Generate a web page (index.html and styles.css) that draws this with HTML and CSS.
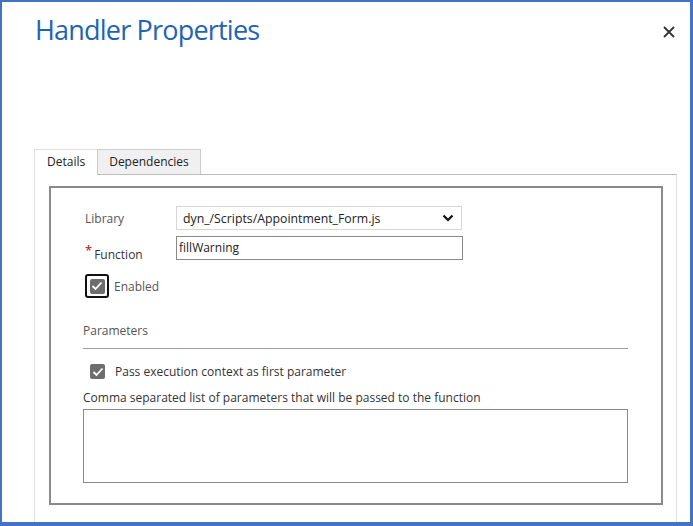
FILE: index.html
```html
<!DOCTYPE html>
<html lang="en">
  <head>
    <meta charset="UTF-8" />
    <title>Handler Properties</title>
    <link rel="stylesheet" href="styles.css">
  </head>
  <body>
    <div class="dialog">
      <div class="header">
        <h1>Handler Properties</h1>
        <span class="close">
          <svg width="12" height="12" viewBox="0 0 12 12"><path d="M1 1L11 11M11 1L1 11" stroke="#333" stroke-width="1.8"/></svg>
        </span>
      </div>

      <div class="tabs">
        <div class="tab active">Details</div>
        <div class="tab">Dependencies</div>
      </div>
      <div class="panel">
        <div class="box">
          <div class="row">
            <label class="lbl">Library</label>
            <div class="select">
              <span>dyn_/Scripts/Appointment_Form.js</span>
              <svg width="12" height="8" viewBox="0 0 12 8"><path d="M1.5 1.5L6 6L10.5 1.5" fill="none" stroke="#111" stroke-width="2.2"/></svg>
            </div>
          </div>
          <div class="row">
            <label class="lbl fn"><span class="req">*</span>Function</label>
            <div class="input">fillWarning</div>
          </div>
          <div class="enabled">
            <span class="focus"><span class="check"><svg width="12" height="10" viewBox="0 0 12 10"><path d="M1.5 5L4.5 8L10.5 1.5" fill="none" stroke="#fff" stroke-width="1.8"/></svg></span></span>
            <span>Enabled</span>
          </div>

          <div class="params">Parameters</div>
          <div class="pass">
            <span class="check"><svg width="12" height="10" viewBox="0 0 12 10"><path d="M1.5 5L4.5 8L10.5 1.5" fill="none" stroke="#fff" stroke-width="1.8"/></svg></span>
            <span>Pass execution context as first parameter</span>
          </div>
          <div class="hint">Comma separated list of parameters that will be passed to the function</div>
          <div class="textarea"></div>
        </div>
      </div>
    </div>
  </body>
</html>
```

FILE: styles.css
```css
body {
    margin: 0;
    font-family: "Open Sans", "Noto Sans", sans-serif;
    color: #333;
}
.dialog {
    width: 693px;
    height: 526px;
    box-sizing: border-box;
    border-style: solid;
    border-color: #4472c4;
    border-width: 2px 3px 4px 2px;
    background: #fff;
    overflow: hidden;
}
.header {
    display: flex;
    justify-content: space-between;
    align-items: flex-start;
    padding: 0 15px 0 33px;
}
.header h1 {
    margin: 9px 0 0;
    font-size: 27px;
    font-weight: normal;
    line-height: 38px;
    color: #1e64b4;
    letter-spacing: -0.8px;
}
.close {
    margin-top: 24px;
    display: flex;
}
.tabs {
    display: flex;
    margin: 100px 0 0 32px;
}
.tab {
    font-size: 12px;
    height: 24px;
    line-height: 24px;
    padding: 0 11px;
    border: 1px solid #ccc;
    border-bottom: none;
    background: #f0f0f0;
    color: #222;
}
.tab.active {
    background: #fff;
    height: 25px;
    margin-bottom: -1px;
    padding: 0 12px;
    border-color: #e0e0e0;
    border-right: none;
}
.panel {
    margin-left: 32px;
    width: 643px;
    height: 360px;
    border: 1px solid #e0e0e0;
    border-top-color: #bbb;
    border-bottom: none;
    padding: 11px 14px 0 14px;
    box-sizing: border-box;
}
.box {
    width: 614px;
    height: 319px;
    box-sizing: border-box;
    border: 2px solid #8a8a8a;
    padding: 18px 33px 0 32px;
    font-size: 12px;
    color: #444;
}
.row {
    display: flex;
    align-items: center;
    height: 24px;
    margin-bottom: 6px;
}
.lbl {
    width: 93px;
    padding-left: 2px;
    box-sizing: border-box;
    color: #555;
}
.fn {
    padding-top: 8px;
    color: #333;
}
.req {
    color: #c00;
    font-size: 13px;
    margin-right: 2px;
    vertical-align: 4px;
}
.select {
    width: 286px;
    height: 24px;
    box-sizing: border-box;
    border: 1px solid #d6d6d6;
    display: flex;
    align-items: center;
    justify-content: space-between;
    padding: 0 7px 0 6px;
    font-size: 12.3px;
    color: #222;
}
.input {
    width: 287px;
    height: 24px;
    box-sizing: border-box;
    border: 1px solid #8a8a8a;
    line-height: 22px;
    padding-left: 2px;
    font-size: 12px;
    color: #222;
}
.enabled {
    display: flex;
    align-items: center;
    gap: 5px;
    margin-top: 14px;
    color: #555;
}
.focus {
    width: 24px;
    height: 24px;
    box-sizing: border-box;
    border: 2px solid #111;
    border-radius: 3px;
    display: flex;
    align-items: center;
    justify-content: center;
    margin-left: 2px;
}
.check {
    width: 15px;
    height: 15px;
    border-radius: 2px;
    background: #6e6e6e;
    display: inline-flex;
    align-items: center;
    justify-content: center;
}
.params {
    margin-top: 24px;
    padding-bottom: 9px;
    border-bottom: 1px solid #a0a0a0;
    color: #555;
}
.pass {
    display: flex;
    align-items: center;
    gap: 10px;
    margin-top: 14px;
    padding-left: 7px;
    color: #333;
}
.hint {
    margin-top: 9px;
    color: #333;
}
.textarea {
    height: 72px;
    border: 1px solid #8a8a8a;
    margin-top: 3px;
}
```
